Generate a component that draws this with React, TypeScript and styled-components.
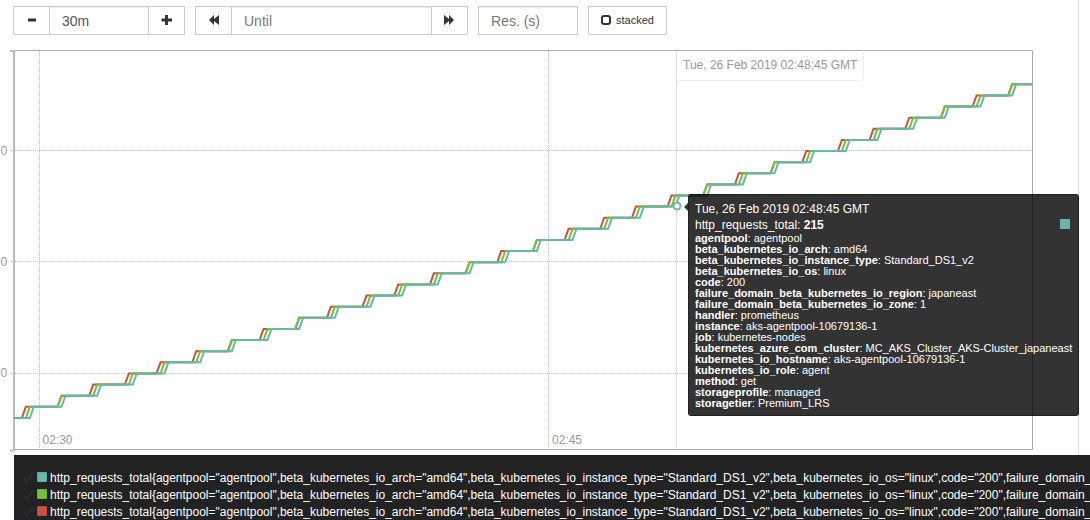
import React from "react";
import styled, { createGlobalStyle } from "styled-components";

const GlobalStyle = createGlobalStyle`
  *, *::before, *::after { box-sizing: border-box; }
  html, body { margin: 0; padding: 0; overflow: hidden; }
  body { background: #fff; font-family: "Liberation Sans", Arial, sans-serif; font-size: 14px; color: #333; }
`;

const Page = styled.div`
  position: relative;
  display: flex;
  flex-direction: column;
  width: 1090px;
  height: 520px;
  overflow: hidden;
`;

const PanelEdge = styled.div`
  position: absolute;
  top: 0;
  left: 1078px;
  width: 1px;
  height: 455px;
  background: #ddd;
`;

const Toolbar = styled.div`
  display: flex;
  gap: 10px;
  height: 50px;
  flex: none;
  padding: 6px 0 0 13px;
`;

const Group = styled.div<{ $width: number }>`
  display: flex;
  width: ${(p) => p.$width}px;
  height: 29px;
  border: 1px solid #ccc;
`;

const IconButton = styled.button<{ $side: "left" | "right" }>`
  display: flex;
  align-items: center;
  justify-content: center;
  width: 36px;
  flex: none;
  padding: 0 0 1px;
  border: 0 solid #ccc;
  border-right-width: ${(p) => (p.$side === "left" ? 1 : 0)}px;
  border-left-width: ${(p) => (p.$side === "right" ? 1 : 0)}px;
  background: #fff;
`;

const Field = styled.div<{ $muted?: boolean }>`
  flex: 1;
  padding: 0 12px;
  line-height: 29px;
  font-size: 14px;
  color: ${(p) => (p.$muted ? "#777" : "#555")};
  box-shadow: inset 0 1px 1px rgba(0, 0, 0, 0.075);
  white-space: nowrap;
`;

const StackButton = styled.button`
  display: flex;
  align-items: center;
  gap: 5px;
  width: 79px;
  height: 29px;
  padding: 0 0 1px 12px;
  border: 1px solid #ccc;
  background: #fff;
  color: #333;
  font: 11px "Liberation Sans", Arial, sans-serif;
`;

const Chart = styled.svg`
  display: block;
  flex: none;
  width: 1090px;
  height: 405px;
  font: 12px "Liberation Sans", Arial, sans-serif;
`;

const HoverDate = styled.div`
  position: absolute;
  left: 677px;
  top: 50px;
  width: 187px;
  height: 31px;
  padding-left: 6px;
  border: 1px solid #eee;
  border-top-color: #aaa;
  border-left: 0;
  border-radius: 0 0 3px 0;
  background: rgba(255, 255, 255, 0.8);
  color: #999;
  font-size: 12px;
  line-height: 28px;
  white-space: nowrap;
`;

const Tooltip = styled.div`
  position: absolute;
  left: 688px;
  top: 194px;
  width: 391px;
  height: 222px;
  padding: 6px;
  border: 1px solid rgba(0, 0, 0, 0.35);
  border-radius: 3px;
  background: rgba(0, 0, 0, 0.8);
  color: #fff;
  white-space: nowrap;

  &::before {
    content: "";
    position: absolute;
    left: -5px;
    top: 8px;
    border: 4px solid transparent;
    border-left: 0;
    border-right-color: rgba(0, 0, 0, 0.8);
  }
`;

const TipDate = styled.div`
  height: 15px;
  font-size: 12px;
  line-height: 16px;
`;

const TipValue = styled.div`
  display: flex;
  justify-content: space-between;
  align-items: center;
  height: 17px;
  padding-right: 2px;
  font-size: 12px;
`;

const TipSwatch = styled.span`
  width: 10px;
  height: 10px;
  margin-bottom: 1px;
  background: #65b9ac;
`;

const Label = styled.div`
  height: 11px;
  line-height: 11px;
  font-size: 11px;
`;

const Legend = styled.div`
  flex: none;
  height: 65px;
  margin-left: 14px;
  padding: 14px 0 0 9px;
  overflow: hidden;
  background: #222;
  color: #fff;
`;

const LegendRow = styled.div`
  display: flex;
  align-items: center;
  height: 17px;
  font-size: 12px;
  letter-spacing: -0.01px;
  white-space: nowrap;
`;

const Check = styled.svg`
  flex: none;
  width: 11px;
  height: 12px;
`;

const Swatch = styled.span<{ $color: string }>`
  flex: none;
  width: 10px;
  height: 10px;
  margin: 0 3px 1px;
  border: 1px solid rgba(0, 0, 0, 0.08);
  border-radius: 1px;
  background: ${(p) => p.$color};
`;

const TEAL = "#65b9ac";
const GREEN = "#73c03a";
const RED = "#cb513a";

const SAMPLE_WIDTH = 1018 / 257;
const SCRAPE_PERIOD = 60 / 7;

// Builds the counter's path: flat between scrapes, rising one unit over one sample.
function stepPath(phase: number) {
  const y = (level: number) => 367.9 - level * 11.12;
  let d = `M14 ${y(0)}`;
  for (let n = 0; n < 30; n++) {
    const k = Math.floor(phase + SCRAPE_PERIOD * n);
    d += `L${14 + k * SAMPLE_WIDTH} ${y(n)}L${14 + (k + 1) * SAMPLE_WIDTH} ${y(n + 1)}`;
  }
  return d + `L1032 ${y(30)}`;
}

const series = [
  { color: RED, phase: 2.65 },
  { color: GREEN, phase: 3.35 },
  { color: TEAL, phase: 4.35 },
];

const labels = [
  ["agentpool", "agentpool"],
  ["beta_kubernetes_io_arch", "amd64"],
  ["beta_kubernetes_io_instance_type", "Standard_DS1_v2"],
  ["beta_kubernetes_io_os", "linux"],
  ["code", "200"],
  ["failure_domain_beta_kubernetes_io_region", "japaneast"],
  ["failure_domain_beta_kubernetes_io_zone", "1"],
  ["handler", "prometheus"],
  ["instance", "aks-agentpool-10679136-1"],
  ["job", "kubernetes-nodes"],
  ["kubernetes_azure_com_cluster", "MC_AKS_Cluster_AKS-Cluster_japaneast"],
  ["kubernetes_io_hostname", "aks-agentpool-10679136-1"],
  ["kubernetes_io_role", "agent"],
  ["method", "get"],
  ["storageprofile", "managed"],
  ["storagetier", "Premium_LRS"],
];

const metric =
  'http_requests_total{agentpool="agentpool",beta_kubernetes_io_arch="amd64",beta_kubernetes_io_instance_type="Standard_DS1_v2",beta_kubernetes_io_os="linux",code="200",failure_domain_';

const Glyph = ({ d }: { d: string }) => (
  <svg width="12" height="12" viewBox="0 0 12 12">
    <path d={d} fill="#333" />
  </svg>
);

export default function App() {
  return (
    <Page>
      <GlobalStyle />
      <Toolbar>
        <Group $width={172}>
          <IconButton $side="left"><Glyph d="M2 4.500h8v3h-8z" /></IconButton>
          <Field>30m</Field>
          <IconButton $side="right"><Glyph d="M4 1h3v3.500h4v3h-4v3.500h-3v-3.500h-3.500v-3h3.500z" /></IconButton>
        </Group>
        <Group $width={273}>
          <IconButton $side="left"><Glyph d="M1 6l5-5v4l5-4v10l-5-4v4z" /></IconButton>
          <Field $muted>Until</Field>
          <IconButton $side="right"><Glyph d="M10 6l-5-5v4l-5-4v10l5-4v4z" /></IconButton>
        </Group>
        <Group $width={100}>
          <Field $muted>Res. (s)</Field>
        </Group>
        <StackButton>
          <svg width="10" height="10" viewBox="0 0 10 10">
            <rect x="1" y="1" width="8" height="8" rx="2" fill="none" stroke="#333" strokeWidth="2" />
          </svg>
          stacked
        </StackButton>
      </Toolbar>

      <Chart viewBox="0 0 1090 405">
        <g stroke="#c4c4c4" strokeDasharray="1 1">
          <path d="M15 100.500H1032M15 211.500H1032M15 323.500H1032" />
          <path d="M39.500 1V399M548.500 1V399" />
        </g>
        <path d="M676.500 1V399" stroke="#ddd" />
        <path d="M14 0.500H1032.500V399.500H14" fill="none" stroke="#aaa" />
        <path d="M10 1H14V400.500H10" fill="none" stroke="#bbb" strokeWidth="2" />
        <path d="M10 100.500H14M10 211.500H14M10 323.500H14" stroke="#ccc" />
        <g fill="#999">
          <text x="0.500" y="105">0</text>
          <text x="0.500" y="216">0</text>
          <text x="0.500" y="327">0</text>
          <text x="42.500" y="394">02:30</text>
          <text x="552" y="394">02:45</text>
        </g>
        {series.map((s) => (
          <path key={s.color} d={stepPath(s.phase)} fill="none" stroke={s.color} strokeWidth="2" />
        ))}
        <circle cx="677" cy="156" r="3.500" fill="#fff" stroke={TEAL} strokeWidth="2" />
      </Chart>

      <Legend>
        {[TEAL, GREEN, RED].map((color) => (
          <LegendRow key={color}>
            <Check viewBox="0 0 11 12">
              <path d="M1.500 6.500L4 9.800L9.800 1" fill="none" stroke="#253443" strokeWidth="1.500" />
            </Check>
            <Swatch $color={color} />
            <span>{metric}</span>
          </LegendRow>
        ))}
      </Legend>

      <PanelEdge />
      <HoverDate>Tue, 26 Feb 2019 02:48:45 GMT</HoverDate>
      <Tooltip>
        <TipDate>Tue, 26 Feb 2019 02:48:45 GMT</TipDate>
        <TipValue>
          <span>http_requests_total: <b>215</b></span>
          <TipSwatch />
        </TipValue>
        {labels.map(([name, value]) => (
          <Label key={name}>
            <b>{name}</b>: {value}
          </Label>
        ))}
      </Tooltip>
    </Page>
  );
}
